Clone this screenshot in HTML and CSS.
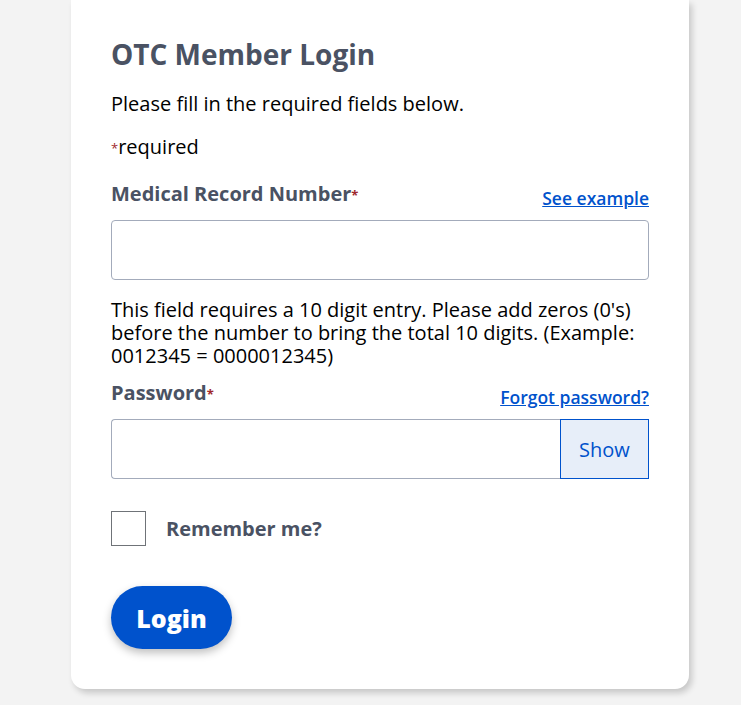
FILE: index.html
```html
<!DOCTYPE html>
<html lang="en">
<head>
<meta charset="utf-8">
<title>OTC Member Login</title>
<link rel="stylesheet" href="styles.css">
</head>
<body>
<main class="card">
  <h1 class="title">OTC Member Login</h1>
  <p class="intro">Please fill in the required fields below.</p>
  <p class="req-note"><span class="star">*</span>required</p>

  <div class="field">
    <div class="label-row">
      <label class="label" for="mrn">Medical Record Number<span class="star">*</span></label>
      <a class="link" href="#">See example</a>
    </div>
    <input class="input" id="mrn" type="text">
    <p class="help">This field requires a 10 digit entry. Please add zeros (0's) before the number to bring the total 10 digits. (Example: 0012345 = 0000012345)</p>
  </div>

  <div class="field field-pw">
    <div class="label-row">
      <label class="label" for="pw">Password<span class="star">*</span></label>
      <a class="link" href="#">Forgot password?</a>
    </div>
    <div class="pw-group">
      <input class="input pw-input" id="pw" type="password">
      <button class="show-btn" type="button">Show</button>
    </div>
  </div>

  <label class="remember">
    <span class="checkbox"></span>
    <span class="remember-text">Remember me?</span>
  </label>

  <button class="login-btn" type="button">Login</button>
</main>
</body>
</html>
```
FILE: styles.css
```css
html, body {
  margin: 0;
  padding: 0;
}
body {
  background: #f3f3f3;
  font-family: "Open Sans", "Noto Sans", sans-serif;
  color: #000;
  height: 705px;
  overflow: hidden;
}
.card {
  box-sizing: border-box;
  margin-left: 71px;
  width: 618px;
  background: #fff;
  border-radius: 0 0 14px 14px;
  box-shadow: 3px 4px 6px rgba(0, 0, 0, 0.18);
  padding: 36px 40px 40px;
}
.title {
  margin: 0;
  font-size: 28px;
  line-height: 36px;
  font-weight: 700;
  color: #4a5263;
}
.intro {
  margin: 18px 0 0;
  font-size: 20px;
  line-height: 28px;
}
.req-note {
  margin: 15px 0 0;
  font-size: 20px;
  line-height: 28px;
}
.star {
  color: #a0282d;
  font-size: 13px;
  vertical-align: 1px;
}
.field {
  margin-top: 18px;
}
.field-pw {
  margin-top: 12px;
}
.label-row {
  display: flex;
  justify-content: space-between;
  align-items: flex-end;
  height: 28px;
}
.label {
  font-size: 20px;
  font-weight: 700;
  color: #4a5263;
  line-height: 28px;
  align-self: flex-start;
}
.link {
  font-size: 17.5px;
  font-weight: 600;
  color: #0052cc;
  text-decoration: underline;
  line-height: 20px;
}
.input {
  display: block;
  box-sizing: border-box;
  width: 100%;
  height: 60px;
  margin-top: 12px;
  border: 1px solid #a3abbb;
  border-radius: 4px;
  font-family: inherit;
  font-size: 20px;
  padding: 0 12px;
  background: #fff;
}
.help {
  margin: 18px 0 0;
  font-size: 20px;
  line-height: 23px;
}
.pw-group {
  display: flex;
  margin-top: 12px;
}
.pw-input {
  margin-top: 0;
  border-radius: 4px 0 0 4px;
  border-right: none;
  flex: 1;
}
.show-btn {
  box-sizing: border-box;
  width: 89px;
  height: 60px;
  background: #e7eef9;
  border: 1px solid #0052cc;
  color: #0052cc;
  font-family: inherit;
  font-size: 20px;
  padding: 0;
}
.remember {
  display: flex;
  align-items: center;
  margin-top: 32px;
}
.checkbox {
  box-sizing: border-box;
  width: 35px;
  height: 35px;
  border: 1px solid #6f7378;
  background: #fff;
}
.remember-text {
  margin-left: 20px;
  font-size: 20px;
  font-weight: 700;
  color: #4a5263;
}
.login-btn {
  display: block;
  margin-top: 40px;
  width: 121px;
  height: 63px;
  border: none;
  border-radius: 32px;
  background: #0052cc;
  color: #fff;
  font-family: inherit;
  font-size: 25px;
  font-weight: 800;
  box-shadow: 0 4px 8px rgba(0, 0, 0, 0.25);
  padding: 0;
}
```
